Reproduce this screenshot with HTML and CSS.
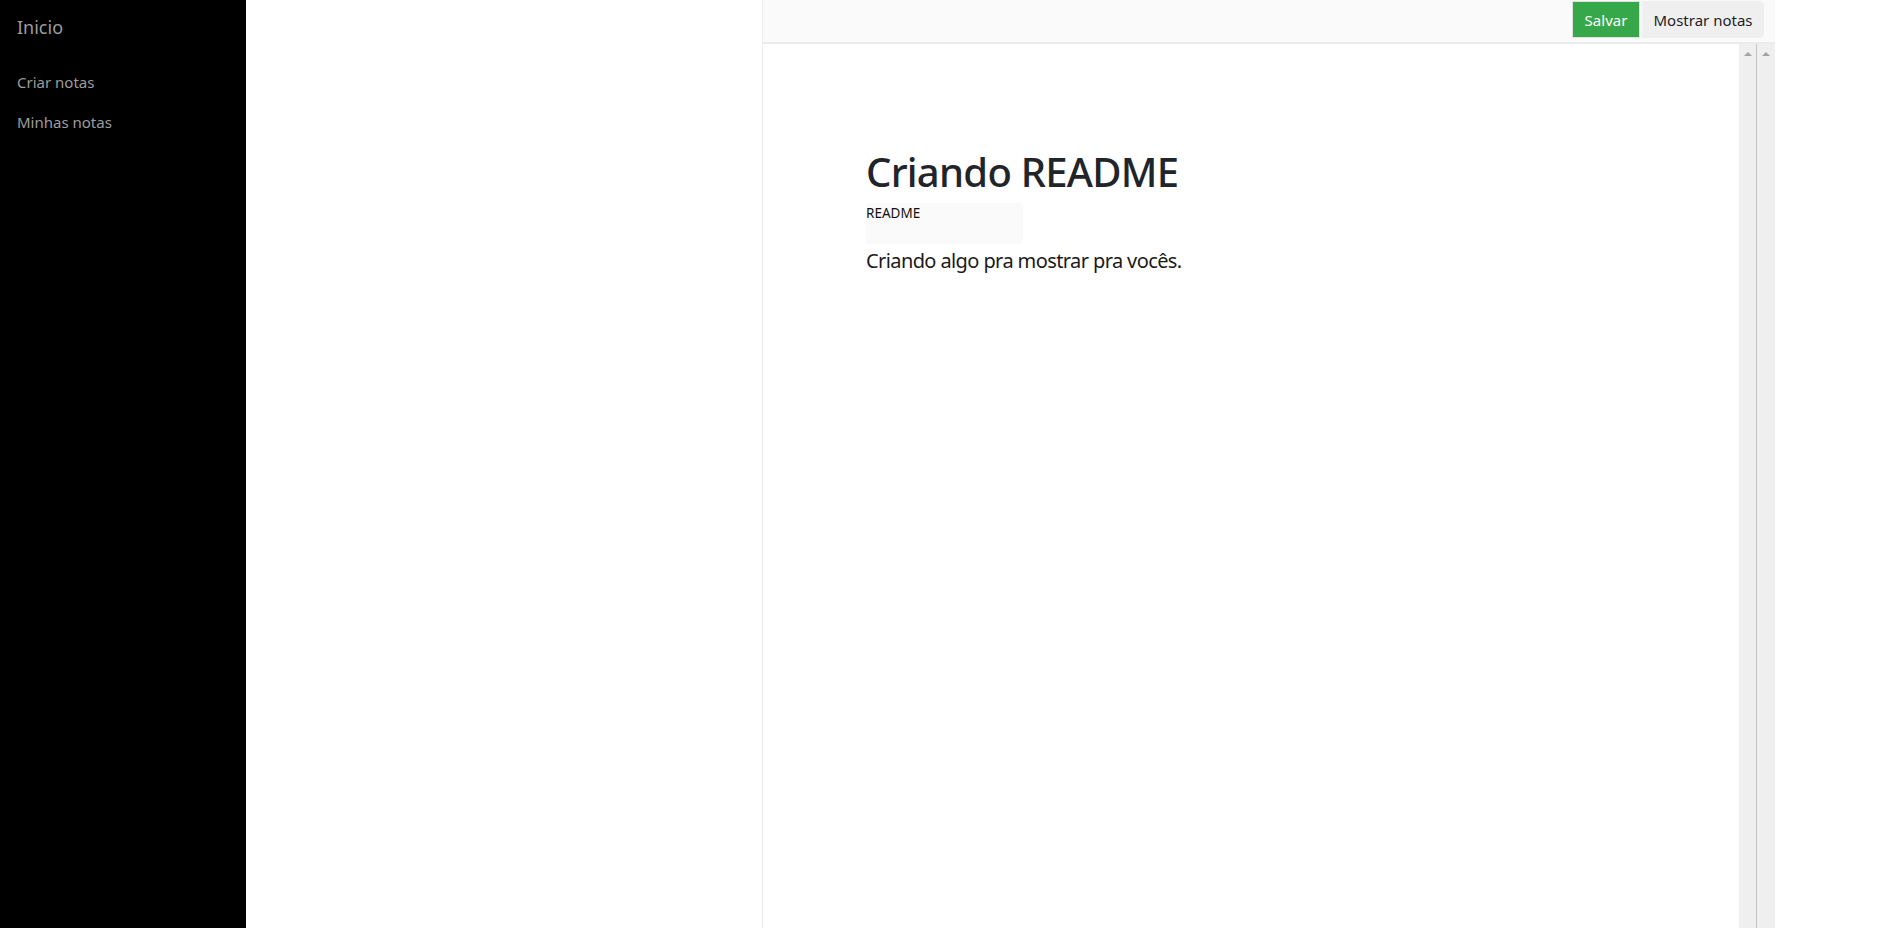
FILE: index.html
```html
<!DOCTYPE html>
<html lang="pt-BR">
<head>
<meta charset="utf-8">
<title>Notas</title>
<link rel="stylesheet" href="styles.css">
</head>
<body>
<div class="app">
  <nav class="sidebar">
    <a class="brand" href="#">Inicio</a>
    <ul class="menu">
      <li><a href="#">Criar notas</a></li>
      <li><a href="#">Minhas notas</a></li>
    </ul>
  </nav>
  <main class="main">
    <section class="editor">
      <div class="toolbar">
        <button class="btn btn-save">Salvar</button>
        <button class="btn btn-show">Mostrar notas</button>
      </div>
      <div class="body">
        <div class="preview">
          <h1 class="title">Criando README</h1>
          <div class="tag">README</div>
          <p class="lead">Criando algo pra mostrar pra vocês.</p>
        </div>
        <div class="scrollbar inner"><span class="arrow"></span></div>
        <div class="scrollbar outer"><span class="arrow"></span></div>
      </div>
    </section>
  </main>
</div>
</body>
</html>
```
FILE: styles.css
```css
* { box-sizing: border-box; }
html, body { margin: 0; padding: 0; height: 100%; }
body {
  font-family: "Noto Sans", "Open Sans", sans-serif;
  background: #fff;
  color: #212529;
  overflow: hidden;
}
.app {
  display: flex;
  height: 928px;
}
.sidebar {
  width: 246px;
  flex: 0 0 246px;
  background: #000;
  padding: 12px 0 0 17px;
}
.brand {
  display: block;
  color: #9d9d9d;
  font-size: 18px;
  line-height: 30px;
  text-decoration: none;
}
.menu {
  list-style: none;
  margin: 30px 0 0;
  padding: 0;
}
.menu li a {
  display: block;
  color: #9d9d9d;
  font-size: 15px;
  line-height: 20px;
  height: 40px;
  text-decoration: none;
}
.main {
  flex: 1;
  padding-left: 516px;
}
.editor {
  width: 1013px;
  height: 100%;
  border-left: 1px solid #ececec;
  display: flex;
  flex-direction: column;
}
.toolbar {
  height: 44px;
  background: #fafafa;
  border-bottom: 2px solid #ebebeb;
  display: flex;
  justify-content: flex-end;
  align-items: flex-start;
  padding: 1px 11px 0 0;
  gap: 2px;
}
.btn {
  height: 37px;
  font-family: inherit;
  font-size: 15px;
  border: 1px solid #e0e0e0;
  padding: 0 12px;
  cursor: pointer;
}
.btn-save {
  background: #37a84a;
  color: #fff;
  width: 68px;
  padding: 0;
}
.btn-show {
  background: #efefef;
  color: #1e1e1e;
  width: 122px;
  padding: 0;
  border-color: #efefef;
  border-radius: 0 5px 5px 0;
}
.body {
  flex: 1;
  display: flex;
}
.preview {
  flex: 1;
  padding: 104px 0 0 103px;
}
.title {
  margin: 0 0 7px;
  font-size: 40px;
  font-weight: 500;
  line-height: 48px;
  letter-spacing: -0.75px;
  color: #212529;
}
.tag {
  width: 157px;
  height: 41px;
  background: #fafafa;
  font-size: 13.5px;
  line-height: 20px;
  color: #111;
  border-radius: 3px;
}
.lead {
  margin: 2px 0 0;
  font-size: 20px;
  line-height: 30px;
  font-weight: 400;
  letter-spacing: -0.6px;
  color: #1a1a1a;
}
.scrollbar {
  background: #efefef;
  display: flex;
  justify-content: center;
  padding-top: 8px;
}
.scrollbar.inner {
  width: 18px;
  border-right: 1px solid #c4c4c4;
}
.scrollbar.outer {
  width: 18px;
}
.arrow {
  width: 0;
  height: 0;
  border-left: 4px solid transparent;
  border-right: 4px solid transparent;
  border-bottom: 4px solid #a3a3a3;
}
```
